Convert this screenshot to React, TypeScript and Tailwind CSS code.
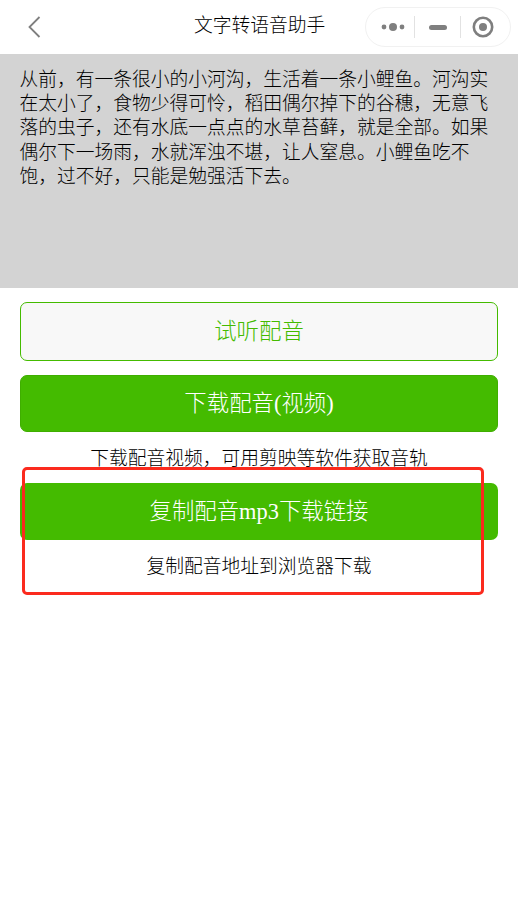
const font = 'font-["Liberation_Serif","Noto_Sans_CJK_SC",serif]'

function Capsule() {
  return (
    <div className="flex h-10 w-[146px] items-center rounded-full border border-[#f1f1f1] bg-white">
      <div className="flex w-[48px] items-center justify-end pr-[9px]">
        <svg width="24" height="10" viewBox="0 0 24 10" className="fill-[#7f7f7f]">
          <circle cx="3" cy="5" r="2.4" />
          <circle cx="12" cy="5" r="4" />
          <circle cx="21" cy="5" r="2.4" />
        </svg>
      </div>
      <div className="h-[22px] w-px bg-[#e2e2e2]" />
      <div className="flex w-[45px] items-center justify-center">
        <div className="h-[5px] w-[18px] rounded-full bg-[#7f7f7f]" />
      </div>
      <div className="h-[22px] w-px bg-[#e2e2e2]" />
      <div className="flex flex-1 items-center pl-[11px]">
        <svg width="22" height="22" viewBox="0 0 22 22" className="fill-none stroke-[#7f7f7f]">
          <circle cx="11" cy="11" r="9.2" strokeWidth="2.6" />
          <circle cx="11" cy="11" r="4" className="fill-[#7f7f7f]" strokeWidth="0" />
        </svg>
      </div>
    </div>
  )
}

function Header() {
  return (
    <header className="relative flex h-[54px] items-center justify-between pl-[28px] pr-[7px]">
      <svg width="13" height="22" viewBox="0 0 13 22" className="fill-none stroke-[#7f7f7f]">
        <path d="M11.5 1 1.5 11l10 10" strokeWidth="1.8" />
      </svg>
      <h1 className="absolute left-[194px] top-[13px] text-[18.75px] leading-[26px] font-light text-black">
        文字转语音助手
      </h1>
      <Capsule />
    </header>
  )
}

export default function App() {
  return (
    <div className={`relative h-[919px] w-[518px] overflow-hidden bg-white ${font}`}>
      <Header />
      <div className="h-[234px] bg-[#d3d3d3] pl-[19.5px] pr-5 pt-[14px] text-[18.75px] leading-[24.2px] font-light text-black">
        从前，有一条很小的小河沟，生活着一条小鲤鱼。河沟实在太小了，食物少得可怜，稻田偶尔掉下的谷穗，无意飞落的虫子，还有水底一点点的水草苔藓，就是全部。如果偶尔下一场雨，水就浑浊不堪，让人窒息。小鲤鱼吃不饱，过不好，只能是勉强活下去。
      </div>

      <div className="flex flex-col px-5 pt-[14px]">
        <button className="h-[59px] rounded-[7px] border border-[#44bb00] bg-[#f8f8f8] text-[22.4px] font-light text-[#44bb00]">
          试听配音
        </button>
        <button className="mt-[14px] h-[57px] rounded-[7px] border border-[#3fae00] bg-[#44bb00] text-[22.4px] font-light text-white">
          下载配音(视频)
        </button>
        <p className="mt-[15px] text-center text-[18.75px] leading-[24px] font-light text-black">
          下载配音视频，可用剪映等软件获取音轨
        </p>
        <button className="mt-[12px] h-[57px] rounded-[7px] bg-[#44bb00] text-[22.4px] font-light text-white">
          复制配音mp3下载链接
        </button>
        <p className="mt-[15px] text-center text-[18.75px] leading-[24px] font-light text-black">
          复制配音地址到浏览器下载
        </p>
      </div>

      <div className="absolute left-[21.5px] top-[466.5px] h-[128px] w-[462.5px] rounded-[5px] border-[3.5px] border-[#fb2a1e]" />
    </div>
  )
}
